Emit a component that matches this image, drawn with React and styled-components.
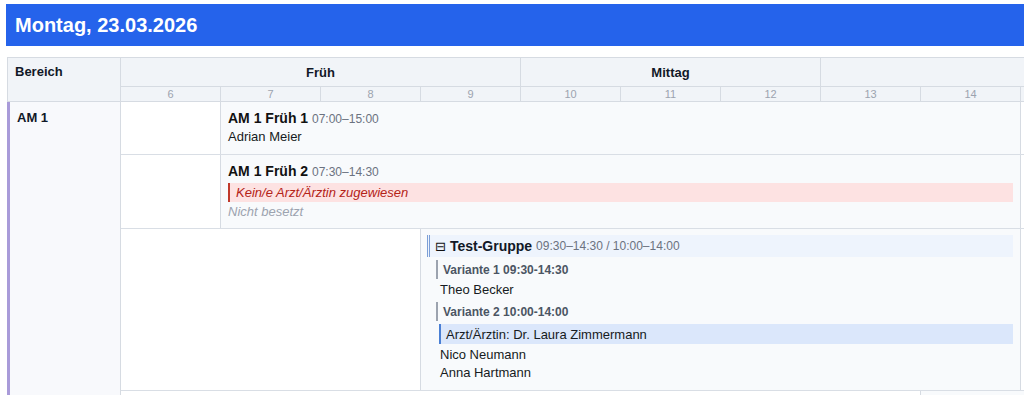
import React from 'react';
import styled, { createGlobalStyle } from 'styled-components';

const HOURS = [6, 7, 8, 9, 10, 11, 12, 13, 14, 15, 16, 17, 18, 19, 20];
const FIRST_HOUR = HOURS[0];

const PERIODS = [
  { label: 'Früh', span: 4 },
  { label: 'Mittag', span: 3 },
  { label: 'Spät', span: 8 },
];

const GlobalStyle = createGlobalStyle`
  html, body {
    margin: 0;
    padding: 0;
    overflow: hidden;
    background: #fff;
  }
  body {
    font-family: "Liberation Sans", Arial, sans-serif;
    color: #111827;
  }
`;

const Page = styled.div`
  width: 1024px;
  height: 395px;
  overflow: hidden;
  padding: 4px 0 0 6px;
  box-sizing: border-box;
`;

const DayBar = styled.h1`
  margin: 0;
  height: 42px;
  display: flex;
  align-items: center;
  padding-left: 9px;
  background: #2563eb;
  color: #fff;
  font-size: 20px;
  font-weight: 700;
`;

const Table = styled.div`
  margin: 11px 0 0 1px;
  width: max-content;
  border-top: 1px solid #d6dbe2;
`;

const HeadGrid = styled.div`
  display: grid;
  grid-template-columns: 114px repeat(${HOURS.length}, 100px);
  grid-template-rows: 29px 15px;
  background: #f1f4f8;
`;

const AreaHead = styled.div`
  grid-row: 1 / span 2;
  border-left: 1px solid #d6dbe2;
  border-right: 1px solid #d6dbe2;
  border-bottom: 1px solid #d6dbe2;
  padding: 6px 7px;
  font-size: 13px;
  font-weight: 700;
  line-height: 16px;
`;

const PeriodHead = styled.div`
  grid-column: span ${(p) => p.$span};
  display: flex;
  align-items: center;
  justify-content: center;
  border-right: 1px solid #d6dbe2;
  border-bottom: 1px solid #d6dbe2;
  font-size: 13px;
  font-weight: 700;
`;

const HourHead = styled.div`
  display: flex;
  align-items: center;
  justify-content: center;
  border-right: 1px solid #d6dbe2;
  border-bottom: 1px solid #d6dbe2;
  font-size: 11px;
  color: #9ca3af;
`;

const AreaRow = styled.div`
  display: grid;
  grid-template-columns: 114px auto;
`;

const AreaCell = styled.div`
  border-left: 3px solid ${(p) => p.$color};
  border-right: 1px solid #d6dbe2;
  background: #f8f9fc;
  padding: 8px 7px;
  font-size: 13px;
  font-weight: 700;
  line-height: 16px;
`;

const Shifts = styled.div`
  display: flex;
  flex-direction: column;
`;

const ShiftRow = styled.div`
  display: grid;
  grid-template-columns: repeat(${HOURS.length}, 100px);
  border-bottom: 1px solid #d9dee5;
  background: #fff;
`;

const Filler = styled.div`
  grid-column: span ${(p) => p.$span};
  border-right: 1px solid #d6dbe2;
`;

const Card = styled.div`
  grid-column: span ${(p) => p.$span};
  border-right: 1px solid #d6dbe2;
  background: #f8fafc;
  padding: ${(p) => (p.$group ? '6px 7px 8px 6px' : '8px 7px')};
  min-width: 0;
`;

const Title = styled.div`
  font-size: 14px;
  line-height: 17px;
  font-weight: 700;
  color: #111;
  white-space: nowrap;
`;

const Time = styled.span`
  font-size: 12px;
  font-weight: 400;
  color: #6b7280;
`;

const Person = styled.div`
  font-size: 13px;
  line-height: 18px;
  color: #161b22;
  padding-left: ${(p) => (p.$indent ? '13px' : '0')};
`;

const Warning = styled.div`
  margin-top: 2px;
  height: 19px;
  display: flex;
  align-items: center;
  padding-left: 6px;
  border-left: 2px solid #c0392b;
  background: #fde2e2;
  color: #b42318;
  font-size: 13px;
  font-style: italic;
`;

const Vacant = styled.div`
  font-size: 13px;
  line-height: 16px;
  margin-top: 2px;
  color: #9ca3af;
  font-style: italic;
`;

const GroupHead = styled.div`
  height: 22px;
  display: flex;
  align-items: center;
  gap: 4px;
  padding-left: 5px;
  border-left: 3px double #7c9fd6;
  background: #eef4fd;
  font-size: 14px;
  font-weight: 700;
  white-space: nowrap;
`;

const Toggle = styled.span`
  font-size: 13px;
  font-weight: 400;
  font-family: "DejaVu Sans", sans-serif;
  color: #111;
`;

const VariantHead = styled.div`
  margin: 3px 0 2px 9px;
  height: 19px;
  display: flex;
  align-items: center;
  padding-left: 5px;
  border-left: 2px solid #9ca3af;
  font-size: 12px;
  font-weight: 700;
  color: #4b5563;
`;

const Doctor = styled.div`
  margin: 3px 0 2px 12px;
  height: 20px;
  display: flex;
  align-items: center;
  padding-left: 5px;
  border-left: 2px solid #4a7fd4;
  background: #dbe7fb;
  font-size: 13px;
  color: #161b22;
`;

const area = {
  name: 'AM 1',
  color: '#a99bd9',
  shifts: [
    { title: 'AM 1 Früh 1', time: '07:00–15:00', from: 7, to: 15, people: ['Adrian Meier'] },
    { title: 'AM 1 Früh 2', time: '07:30–14:30', from: 7, to: 15, missingDoctor: true, vacant: true },
    {
      group: true,
      title: 'Test-Gruppe',
      time: '09:30–14:30 / 10:00–14:00',
      from: 9,
      to: 15,
      variants: [
        { label: 'Variante 1 09:30-14:30', people: ['Theo Becker'] },
        { label: 'Variante 2 10:00-14:00', doctor: 'Dr. Laura Zimmermann', people: ['Nico Neumann', 'Anna Hartmann'] },
      ],
    },
    { title: 'AM 1 Spät 1', time: '14:00–22:00', from: 14, to: 21, people: ['Lena Schulz'] },
  ],
};

function ShiftCard({ shift }) {
  const span = Math.min(shift.to, FIRST_HOUR + HOURS.length) - shift.from;
  if (shift.group) {
    return (
      <Card $span={span} $group>
        <GroupHead>
          <Toggle>⊟</Toggle>
          <span>{shift.title}</span>
          <Time>{shift.time}</Time>
        </GroupHead>
        {shift.variants.map((v) => (
          <div key={v.label}>
            <VariantHead>{v.label}</VariantHead>
            {v.doctor && <Doctor>Arzt/Ärztin: {v.doctor}</Doctor>}
            {v.people.map((p) => (
              <Person key={p} $indent>{p}</Person>
            ))}
          </div>
        ))}
      </Card>
    );
  }
  return (
    <Card $span={span}>
      <Title>
        {shift.title} <Time>{shift.time}</Time>
      </Title>
      {shift.missingDoctor && <Warning>Kein/e Arzt/Ärztin zugewiesen</Warning>}
      {shift.vacant && <Vacant>Nicht besetzt</Vacant>}
      {shift.people && shift.people.map((p) => <Person key={p}>{p}</Person>)}
    </Card>
  );
}

export default function App() {
  return (
    <Page>
      <GlobalStyle />
      <DayBar>Montag, 23.03.2026</DayBar>
      <Table>
        <HeadGrid>
          <AreaHead>Bereich</AreaHead>
          {PERIODS.map((p) => (
            <PeriodHead key={p.label} $span={p.span}>{p.label}</PeriodHead>
          ))}
          {HOURS.map((h) => (
            <HourHead key={h}>{h}</HourHead>
          ))}
        </HeadGrid>
        <AreaRow>
          <AreaCell $color={area.color}>{area.name}</AreaCell>
          <Shifts>
            {area.shifts.map((s) => (
              <ShiftRow key={s.title}>
                {s.from > FIRST_HOUR && <Filler $span={s.from - FIRST_HOUR} />}
                <ShiftCard shift={s} />
              </ShiftRow>
            ))}
          </Shifts>
        </AreaRow>
      </Table>
    </Page>
  );
}
